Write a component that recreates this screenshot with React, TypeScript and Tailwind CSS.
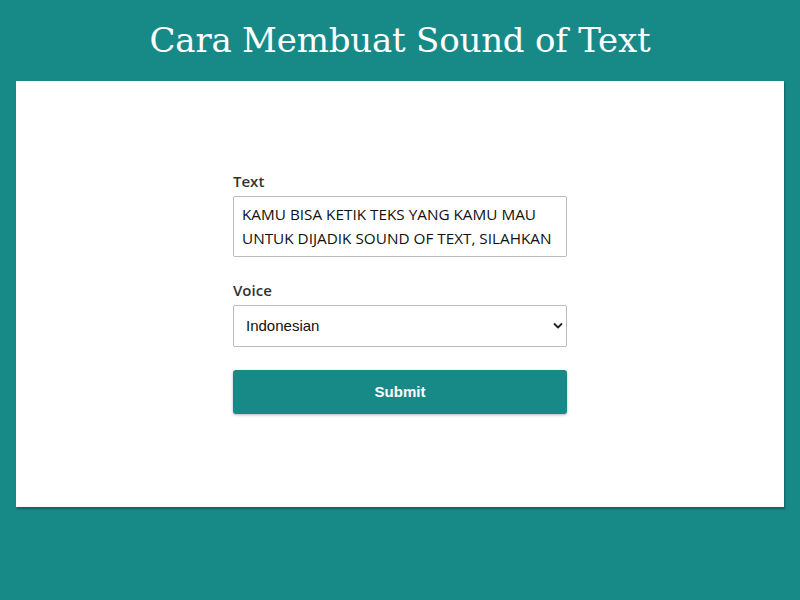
import { useState } from "react";

const TEAL = "bg-[#178a88]";

function Chevron() {
  return (
    <svg width="10" height="7" viewBox="0 0 10 7" className="pointer-events-none absolute right-[4px] top-1/2 -translate-y-1/2">
      <path d="M1.5 1.5 L5 5 L8.5 1.5" fill="none" stroke="#222" strokeWidth="1.8" strokeLinecap="round" strokeLinejoin="round" />
    </svg>
  );
}

export default function App() {
  const [text, setText] = useState("KAMU BISA KETIK TEKS YANG KAMU MAU UNTUK DIJADIK SOUND OF TEXT, SILAHKAN");
  const [voice, setVoice] = useState("id");

  return (
    <div className={`min-h-[600px] w-[800px] ${TEAL} flex flex-col`}>
      {/* Title */}
      <div className="h-[81px] flex items-center justify-center pb-[1px]">
        <h1 className="text-white text-[34px] leading-none font-['DejaVu_Serif',serif] tracking-[-0.2px]">
          Cara Membuat Sound of Text
        </h1>
      </div>

      {/* Card */}
      <div className="mx-4 h-[426px] bg-white shadow-[1px_2px_2px_rgba(0,0,0,0.3)] flex justify-center">
        <form className="w-[334px] mt-[90px] flex flex-col" onSubmit={e => e.preventDefault()}>
          <label className="text-[15px] font-semibold text-[#333] font-['Open_Sans',sans-serif] leading-5 mb-[5px]">
            Text
          </label>
          <textarea
            value={text}
            onChange={e => setText(e.target.value)}
            className="h-[61px] resize-none border border-[#bbb] rounded-[2px] px-[8px] pt-[5px] text-[15.3px] leading-6 text-[#111] font-['Open_Sans',sans-serif] outline-none overflow-hidden"
          />

          <label className="mt-[23px] text-[15px] font-semibold text-[#333] font-['Open_Sans',sans-serif] leading-5 mb-[5px]">
            Voice
          </label>
          <div className="relative">
            <select
              value={voice}
              onChange={e => setVoice(e.target.value)}
              className="w-full h-[42px] appearance-none bg-white border border-[#bbb] rounded-[2px] pl-[12px] text-[15px] text-[#111] font-['Liberation_Sans',Arial,sans-serif] outline-none"
            >
              <option value="id">Indonesian</option>
              <option value="en">English</option>
            </select>
            <Chevron />
          </div>

          <button
            type="submit"
            className={`mt-[23px] h-[44px] ${TEAL} rounded-[3px] shadow-[0_1px_3px_rgba(0,0,0,0.3)] text-white text-[15px] font-bold font-['Liberation_Sans',Arial,sans-serif]`}
          >
            Submit
          </button>
        </form>
      </div>
    </div>
  );
}
